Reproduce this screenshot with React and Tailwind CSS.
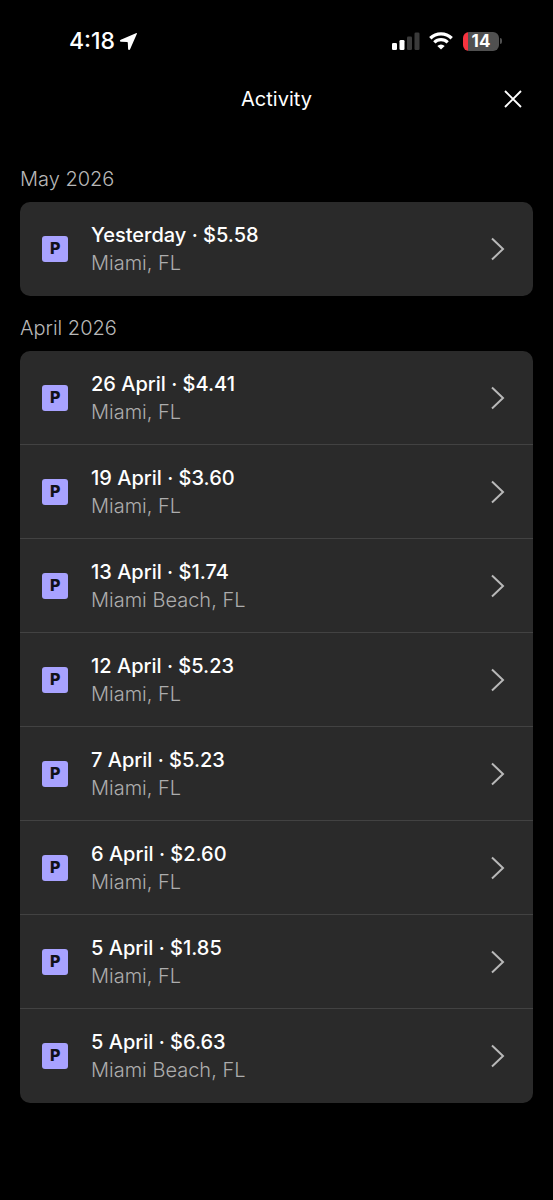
import React from 'react';

const sections = [
    {
        title: 'May 2026',
        items: [{ id: 1, date: 'Yesterday', amount: '$5.58', place: 'Miami, FL' }],
    },
    {
        title: 'April 2026',
        items: [
            { id: 2, date: '26 April', amount: '$4.41', place: 'Miami, FL' },
            { id: 3, date: '19 April', amount: '$3.60', place: 'Miami, FL' },
            { id: 4, date: '13 April', amount: '$1.74', place: 'Miami Beach, FL' },
            { id: 5, date: '12 April', amount: '$5.23', place: 'Miami, FL' },
            { id: 6, date: '7 April', amount: '$5.23', place: 'Miami, FL' },
            { id: 7, date: '6 April', amount: '$2.60', place: 'Miami, FL' },
            { id: 8, date: '5 April', amount: '$1.85', place: 'Miami, FL' },
            { id: 9, date: '5 April', amount: '$6.63', place: 'Miami Beach, FL' },
        ],
    },
];

const StatusBar = () => (
    <div className="flex items-center justify-between pt-[25px] pl-[69px] pr-[51px]">
        <div className="flex items-center gap-1 text-[23px] leading-8 font-medium">
            <span>4:18</span>
            <svg className="w-[19px] h-[19px]" viewBox="0 0 19 19" fill="currentColor" aria-hidden="true">
                <path d="M16.900 1.200 1.800 7.700c-1.300.6-1.100 2 .2 2.100l6.100.3c.5 0 .7.2.7.7l.3 6.100c.1 1.300 1.500 1.500 2.100.2L17.800 2.100c.3-.7-.2-1.200-.9-.9Z" />
            </svg>
        </div>
        <div className="flex items-center">
            {/* Signal */}
            <svg className="w-7 h-[18px]" viewBox="0 0 28 18" fill="currentColor" aria-hidden="true">
                <rect x="0" y="11" width="5" height="7" rx="1.3" />
                <rect x="7.5" y="8" width="5" height="10" rx="1.3" />
                <rect x="15" y="4.5" width="5" height="13.5" rx="1.3" fill="#3a3a3a" />
                <rect x="22.5" y="0.5" width="5" height="17.5" rx="1.3" fill="#3a3a3a" />
            </svg>
            {/* Wifi */}
            <svg className="ml-[9px] w-6 h-[18px]" viewBox="0 0 24 18" fill="none" stroke="currentColor" aria-hidden="true">
                <path d="M1.3 6.2a15.3 15.3 0 0 1 21.4 0" strokeWidth="3.3" />
                <path d="M5.3 10.4a9.6 9.6 0 0 1 13.4 0" strokeWidth="3.2" />
                <path d="M12 17.6 8.3 13.9a5.3 5.3 0 0 1 7.4 0Z" fill="currentColor" stroke="none" />
            </svg>
            {/* Battery */}
            <div className="ml-[10px] flex items-center">
                <div className="flex h-[19px] w-9 items-center justify-center rounded-md bg-linear-to-r from-[#f5333f] from-[5px] to-[#505050] to-[5px] text-[17px] leading-none font-bold">
                    14
                </div>
                <div className="ml-px h-[6px] w-[2px] rounded-r-full bg-[#505050]" />
            </div>
        </div>
    </div>
);

const ActivityRow = ({ item }) => (
    <li className="border-b border-[#424242] last:border-transparent">
        <button type="button" className="flex w-full items-center pt-[19px] pb-[18px] pr-7 pl-[22px] text-left">
            <span className="flex size-[26px] shrink-0 items-center justify-center rounded-[3px] bg-[#a8a2ff] font-['DejaVu_Sans',sans-serif] text-[15px] leading-none font-bold text-[#111118]">
                P
            </span>
            <span className="ml-[23px] flex-1 text-xl leading-7">
                <span className="block font-medium text-white">
                    {item.date} · {item.amount}
                </span>
                <span className="block font-light text-[#adadad]">{item.place}</span>
            </span>
            <svg className="w-[15px] h-6" viewBox="0 0 15 24" fill="none" stroke="#b8b8b8" strokeWidth="2" aria-hidden="true">
                <path d="m2 1.5 11 10.5L2 22.5" />
            </svg>
        </button>
    </li>
);

export default function App() {
    return (
        <div className="min-h-screen bg-black font-['Inter',sans-serif] text-white">
            <StatusBar />

            <header className="mt-7 grid grid-cols-[1fr_auto_1fr] items-center px-5">
                <h1 className="col-start-2 text-xl leading-7">Activity</h1>
                <button type="button" aria-label="Close" className="mr-[11px] justify-self-end">
                    <svg className="size-[18px]" viewBox="0 0 18 18" fill="none" stroke="currentColor" strokeWidth="1.9">
                        <path d="m1 1 16 16M17 1 1 17" />
                    </svg>
                </button>
            </header>

            <main className="px-5 pt-[52px] pb-12">
                {sections.map((section) => (
                    <section key={section.title} className="mb-[18px]">
                        <h2 className="mb-[9px] text-xl leading-7 font-light text-[#b8b8b8]">{section.title}</h2>
                        <ul className="overflow-hidden rounded-[10px] bg-[#2a2a2a]">
                            {section.items.map((item) => (
                                <ActivityRow key={item.id} item={item} />
                            ))}
                        </ul>
                    </section>
                ))}
            </main>
        </div>
    );
}
